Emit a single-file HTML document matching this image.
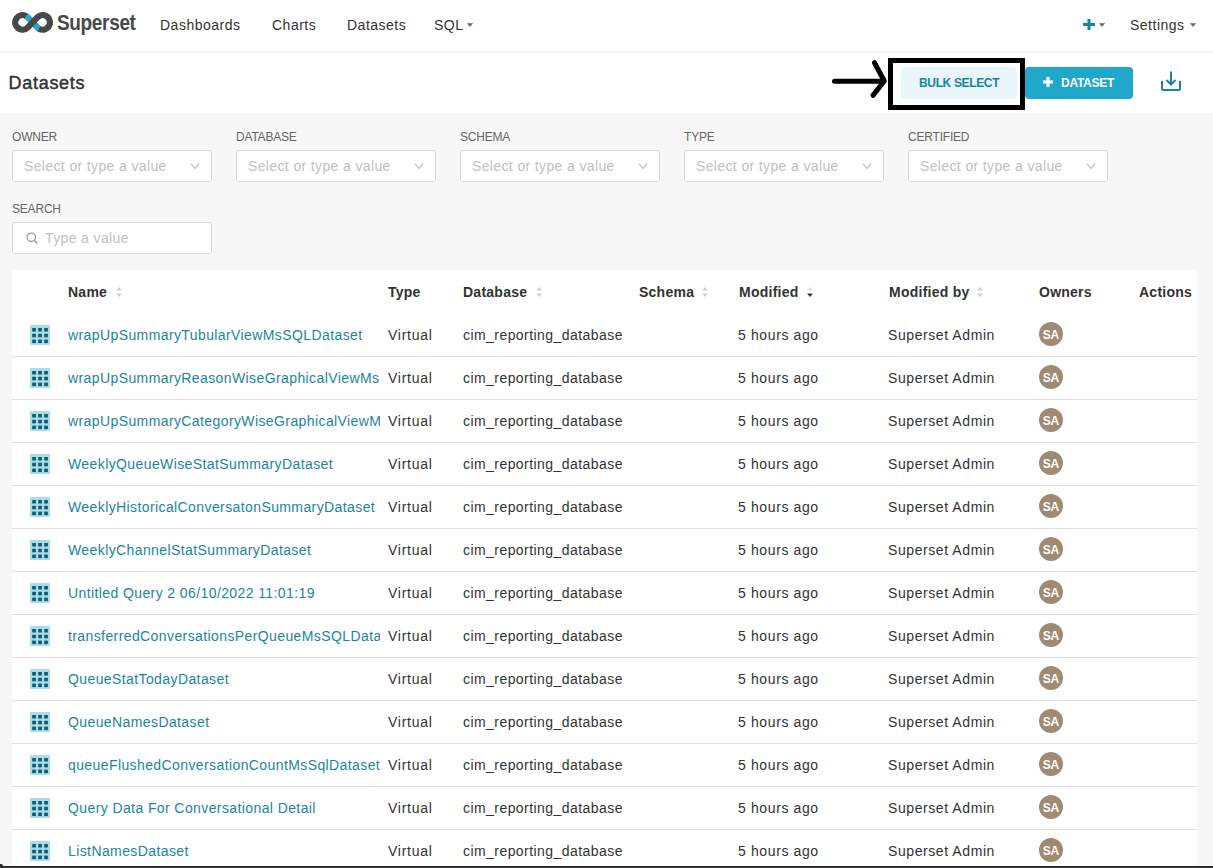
<!DOCTYPE html><html><head><meta charset="utf-8"><title>Datasets</title><style>
*{margin:0;padding:0;box-sizing:border-box}
html,body{width:1213px;height:868px;overflow:hidden;background:#f7f7f7;font-family:"Liberation Sans",sans-serif;color:#323232}
.abs{position:absolute;white-space:nowrap}
#nav{position:absolute;left:0;top:0;width:1213px;height:51px;background:#fff}
#navb{position:absolute;left:0;top:51px;width:1213px;height:2px;background:#f4f4f4}
#ph{position:absolute;left:0;top:53px;width:1213px;height:60px;background:#fff}
.nav{font-size:14px;letter-spacing:0.5px;color:#323232;line-height:16px}
.caret{position:absolute;width:6px;height:4px}
.lbl{font-size:12px;color:#666;line-height:14px;letter-spacing:-0.2px}
.inp{position:absolute;width:200px;height:32px;background:#fff;border:1px solid #d9d9d9;border-radius:3px}
.ph{font-size:14px;color:#bfbfbf;letter-spacing:0.37px;line-height:16px}
.hd{font-size:14px;font-weight:bold;color:#323232;line-height:16px;letter-spacing:0.25px}
.td{font-size:14px;color:#323232;line-height:16px;letter-spacing:0.4px}
.lnk{font-size:14px;color:#1a85a0;line-height:16px;letter-spacing:0.4px;overflow:hidden;width:312px}
.div{position:absolute;left:12px;width:1185px;height:1px;background:#e0e0e0}
.av{position:absolute;width:24px;height:24px;border-radius:50%;background:#a08a73;color:#fff;font-size:12px;font-weight:bold;text-align:center;line-height:26px;letter-spacing:-0.4px;text-indent:-0.4px}
.sort{position:absolute;width:6px;height:10px}
</style></head><body>
<div id="nav"></div><div id="navb"></div><div id="ph"></div>
<svg class="abs" style="left:0;top:0" width="60" height="45" viewBox="0 0 60 45"><path d="M26.42 16.21 A7.3 7.3 0 0 1 27.85 17.38 L37.35 27.42 A7.3 7.3 0 0 0 38.78 28.59" stroke="#20a7c9" stroke-width="6.3" fill="none"/><path d="M38.78 28.59 A7.3 7.3 0 1 0 37.35 17.38 L27.85 27.42 A7.3 7.3 0 1 1 26.42 16.21" stroke="#484848" stroke-width="6.3" fill="none"/></svg>
<div class="abs" style="left:57px;top:10px;font-size:21.5px;font-weight:bold;color:#484848;letter-spacing:-0.4px;line-height:26px;transform:scaleX(0.885);transform-origin:0 0">Superset</div>
<div class="abs nav" style="left:160px;top:17px">Dashboards</div>
<div class="abs nav" style="left:272px;top:17px">Charts</div>
<div class="abs nav" style="left:347px;top:17px">Datasets</div>
<div class="abs nav" style="left:434px;top:17px">SQL</div>
<svg class="caret" style="left:467px;top:23px" viewBox="0 0 6 4"><path d="M0.4 0.4 H5.6 L3 3.6 Z" fill="#666" stroke="#666" stroke-width="0.6" stroke-linejoin="round"/></svg>
<svg class="abs" style="left:1083px;top:19px" width="12" height="11" viewBox="0 0 12 11"><path d="M6 0V11M0 5.5H12" stroke="#1a85a0" stroke-width="3"/></svg>
<svg class="caret" style="left:1099px;top:23px" viewBox="0 0 6 4"><path d="M0.4 0.4 H5.6 L3 3.6 Z" fill="#666" stroke="#666" stroke-width="0.6" stroke-linejoin="round"/></svg>
<div class="abs nav" style="left:1130px;top:17px">Settings</div>
<svg class="caret" style="left:1190px;top:23px" viewBox="0 0 6 4"><path d="M0.4 0.4 H5.6 L3 3.6 Z" fill="#666" stroke="#666" stroke-width="0.6" stroke-linejoin="round"/></svg>
<div class="abs" style="left:8.5px;top:73px;font-size:18px;font-weight:normal;-webkit-text-stroke:0.45px #323232;color:#323232;line-height:20px;letter-spacing:0.72px">Datasets</div>
<svg class="abs" style="left:820px;top:50px" width="70" height="60" viewBox="820 50 70 60"><path d="M834.5 81.3 H884 M874.5 62.7 L884.3 81 L873 95.4" stroke="#000" stroke-width="5" stroke-linecap="round" stroke-linejoin="round" fill="none"/></svg>
<div class="abs" style="left:888px;top:58px;width:137px;height:52px;border:5px solid #000"></div>
<div class="abs" style="left:901px;top:67px;width:116px;height:32px;background:#e9f6f9;border-radius:4px"></div>
<div class="abs" style="left:919px;top:76px;font-size:12px;font-weight:bold;color:#1a85a0;letter-spacing:-0.35px;line-height:14px">BULK SELECT</div>
<div class="abs" style="left:1025px;top:67px;width:108px;height:32px;background:#20a7c9;border-radius:4px"></div>
<svg class="abs" style="left:1043px;top:77px" width="10" height="10" viewBox="0 0 10 10"><path d="M5 0V10M0 5H10" stroke="#fff" stroke-width="3.1"/></svg>
<div class="abs" style="left:1061px;top:76px;font-size:12px;font-weight:bold;color:#fff;letter-spacing:-0.27px;line-height:14px">DATASET</div>
<svg class="abs" style="left:1160px;top:70px" width="22" height="22" viewBox="0 0 22 22"><path d="M11 1.5 V14.5 M6.5 10 L11 14.5 L15.5 10" stroke="#1a85a0" stroke-width="2" fill="none" stroke-linecap="butt" stroke-linejoin="miter"/><path d="M2 11 V18.5 Q2 20 3.5 20 H18.5 Q20 20 20 18.5 V11" stroke="#1a85a0" stroke-width="2" fill="none"/></svg>
<div class="abs lbl" style="left:12px;top:130px">OWNER</div>
<div class="inp" style="left:12px;top:150px"></div>
<div class="abs ph" style="left:24px;top:158px">Select or type a value</div>
<svg class="abs" style="left:190px;top:162px" width="12" height="8" viewBox="0 0 12 8"><path d="M0.9 1.7 L5 6.6 L9.1 1.7" stroke="#bdbdbd" stroke-width="1.05" fill="none"/></svg>
<div class="abs lbl" style="left:236px;top:130px">DATABASE</div>
<div class="inp" style="left:236px;top:150px"></div>
<div class="abs ph" style="left:248px;top:158px">Select or type a value</div>
<svg class="abs" style="left:414px;top:162px" width="12" height="8" viewBox="0 0 12 8"><path d="M0.9 1.7 L5 6.6 L9.1 1.7" stroke="#bdbdbd" stroke-width="1.05" fill="none"/></svg>
<div class="abs lbl" style="left:460px;top:130px">SCHEMA</div>
<div class="inp" style="left:460px;top:150px"></div>
<div class="abs ph" style="left:472px;top:158px">Select or type a value</div>
<svg class="abs" style="left:638px;top:162px" width="12" height="8" viewBox="0 0 12 8"><path d="M0.9 1.7 L5 6.6 L9.1 1.7" stroke="#bdbdbd" stroke-width="1.05" fill="none"/></svg>
<div class="abs lbl" style="left:684px;top:130px">TYPE</div>
<div class="inp" style="left:684px;top:150px"></div>
<div class="abs ph" style="left:696px;top:158px">Select or type a value</div>
<svg class="abs" style="left:862px;top:162px" width="12" height="8" viewBox="0 0 12 8"><path d="M0.9 1.7 L5 6.6 L9.1 1.7" stroke="#bdbdbd" stroke-width="1.05" fill="none"/></svg>
<div class="abs lbl" style="left:908px;top:130px">CERTIFIED</div>
<div class="inp" style="left:908px;top:150px"></div>
<div class="abs ph" style="left:920px;top:158px">Select or type a value</div>
<svg class="abs" style="left:1086px;top:162px" width="12" height="8" viewBox="0 0 12 8"><path d="M0.9 1.7 L5 6.6 L9.1 1.7" stroke="#bdbdbd" stroke-width="1.05" fill="none"/></svg>
<div class="abs lbl" style="left:12px;top:202px">SEARCH</div>
<div class="inp" style="left:12px;top:222px"></div>
<svg class="abs" style="left:26px;top:232px" width="13" height="13" viewBox="0 0 13 13"><circle cx="5.3" cy="5.3" r="4.2" stroke="#9a9a9a" stroke-width="1.3" fill="none"/><path d="M8.4 8.4 L11.5 11.5" stroke="#9a9a9a" stroke-width="1.4"/></svg>
<div class="abs ph" style="left:45px;top:230px">Type a value</div>
<div class="abs" style="left:12px;top:270px;width:1185px;height:600px;background:#fff"></div>
<div class="abs hd" style="left:68px;top:284px">Name</div>
<svg class="abs" style="left:116px;top:287px" width="6" height="10" viewBox="0 0 6 10"><path d="M0 3.5 L3 0 L6 3.5 Z" fill="#d1d1d1"/><path d="M0 6.5 L3 10 L6 6.5 Z" fill="#d1d1d1"/></svg>
<div class="abs hd" style="left:388px;top:284px">Type</div>
<div class="abs hd" style="left:463px;top:284px">Database</div>
<svg class="abs" style="left:536px;top:287px" width="6" height="10" viewBox="0 0 6 10"><path d="M0 3.5 L3 0 L6 3.5 Z" fill="#d1d1d1"/><path d="M0 6.5 L3 10 L6 6.5 Z" fill="#d1d1d1"/></svg>
<div class="abs hd" style="left:639px;top:284px">Schema</div>
<svg class="abs" style="left:701.5px;top:287px" width="6" height="10" viewBox="0 0 6 10"><path d="M0 3.5 L3 0 L6 3.5 Z" fill="#d1d1d1"/><path d="M0 6.5 L3 10 L6 6.5 Z" fill="#d1d1d1"/></svg>
<div class="abs hd" style="left:739px;top:284px">Modified</div>
<svg class="abs" style="left:806.5px;top:287px" width="6" height="10" viewBox="0 0 6 10"><path d="M0 3.5 L3 0 L6 3.5 Z" fill="#dedede"/><path d="M0 6.5 L3 10 L6 6.5 Z" fill="#323232"/></svg>
<div class="abs hd" style="left:889px;top:284px">Modified by</div>
<svg class="abs" style="left:977px;top:287px" width="6" height="10" viewBox="0 0 6 10"><path d="M0 3.5 L3 0 L6 3.5 Z" fill="#d1d1d1"/><path d="M0 6.5 L3 10 L6 6.5 Z" fill="#d1d1d1"/></svg>
<div class="abs hd" style="left:1039px;top:284px">Owners</div>
<div class="abs hd" style="left:1139px;top:284px">Actions</div>
<svg class="abs" style="left:30px;top:325px" width="20" height="20" viewBox="0 0 20 20"><rect x="0" y="0" width="20" height="20" rx="1" fill="#a9dbe8"/><rect x="2.2" y="3.0" width="3.7" height="3.5" fill="#0f5d73"/><rect x="8.2" y="3.0" width="3.7" height="3.5" fill="#0f5d73"/><rect x="14.2" y="3.0" width="3.7" height="3.5" fill="#0f5d73"/><rect x="2.2" y="8.8" width="3.7" height="3.5" fill="#0f5d73"/><rect x="8.2" y="8.8" width="3.7" height="3.5" fill="#0f5d73"/><rect x="14.2" y="8.8" width="3.7" height="3.5" fill="#0f5d73"/><rect x="2.2" y="14.6" width="3.7" height="3.5" fill="#0f5d73"/><rect x="8.2" y="14.6" width="3.7" height="3.5" fill="#0f5d73"/><rect x="14.2" y="14.6" width="3.7" height="3.5" fill="#0f5d73"/></svg>
<div class="abs lnk" style="left:68px;top:327px">wrapUpSummaryTubularViewMsSQLDataset</div>
<div class="abs td" style="left:388px;top:327px;letter-spacing:0.75px">Virtual</div>
<div class="abs td" style="left:463px;top:327px;letter-spacing:0.44px">cim_reporting_database</div>
<div class="abs td" style="left:738px;top:327px;letter-spacing:0.62px">5 hours ago</div>
<div class="abs td" style="left:888px;top:327px;letter-spacing:0.58px">Superset Admin</div>
<div class="av" style="left:1039px;top:322px">SA</div>
<div class="div" style="top:356px"></div>
<svg class="abs" style="left:30px;top:368px" width="20" height="20" viewBox="0 0 20 20"><rect x="0" y="0" width="20" height="20" rx="1" fill="#a9dbe8"/><rect x="2.2" y="3.0" width="3.7" height="3.5" fill="#0f5d73"/><rect x="8.2" y="3.0" width="3.7" height="3.5" fill="#0f5d73"/><rect x="14.2" y="3.0" width="3.7" height="3.5" fill="#0f5d73"/><rect x="2.2" y="8.8" width="3.7" height="3.5" fill="#0f5d73"/><rect x="8.2" y="8.8" width="3.7" height="3.5" fill="#0f5d73"/><rect x="14.2" y="8.8" width="3.7" height="3.5" fill="#0f5d73"/><rect x="2.2" y="14.6" width="3.7" height="3.5" fill="#0f5d73"/><rect x="8.2" y="14.6" width="3.7" height="3.5" fill="#0f5d73"/><rect x="14.2" y="14.6" width="3.7" height="3.5" fill="#0f5d73"/></svg>
<div class="abs lnk" style="left:68px;top:370px">wrapUpSummaryReasonWiseGraphicalViewMsSQLDataset</div>
<div class="abs td" style="left:388px;top:370px;letter-spacing:0.75px">Virtual</div>
<div class="abs td" style="left:463px;top:370px;letter-spacing:0.44px">cim_reporting_database</div>
<div class="abs td" style="left:738px;top:370px;letter-spacing:0.62px">5 hours ago</div>
<div class="abs td" style="left:888px;top:370px;letter-spacing:0.58px">Superset Admin</div>
<div class="av" style="left:1039px;top:365px">SA</div>
<div class="div" style="top:399px"></div>
<svg class="abs" style="left:30px;top:411px" width="20" height="20" viewBox="0 0 20 20"><rect x="0" y="0" width="20" height="20" rx="1" fill="#a9dbe8"/><rect x="2.2" y="3.0" width="3.7" height="3.5" fill="#0f5d73"/><rect x="8.2" y="3.0" width="3.7" height="3.5" fill="#0f5d73"/><rect x="14.2" y="3.0" width="3.7" height="3.5" fill="#0f5d73"/><rect x="2.2" y="8.8" width="3.7" height="3.5" fill="#0f5d73"/><rect x="8.2" y="8.8" width="3.7" height="3.5" fill="#0f5d73"/><rect x="14.2" y="8.8" width="3.7" height="3.5" fill="#0f5d73"/><rect x="2.2" y="14.6" width="3.7" height="3.5" fill="#0f5d73"/><rect x="8.2" y="14.6" width="3.7" height="3.5" fill="#0f5d73"/><rect x="14.2" y="14.6" width="3.7" height="3.5" fill="#0f5d73"/></svg>
<div class="abs lnk" style="left:68px;top:413px">wrapUpSummaryCategoryWiseGraphicalViewMsSQLDataset</div>
<div class="abs td" style="left:388px;top:413px;letter-spacing:0.75px">Virtual</div>
<div class="abs td" style="left:463px;top:413px;letter-spacing:0.44px">cim_reporting_database</div>
<div class="abs td" style="left:738px;top:413px;letter-spacing:0.62px">5 hours ago</div>
<div class="abs td" style="left:888px;top:413px;letter-spacing:0.58px">Superset Admin</div>
<div class="av" style="left:1039px;top:408px">SA</div>
<div class="div" style="top:442px"></div>
<svg class="abs" style="left:30px;top:454px" width="20" height="20" viewBox="0 0 20 20"><rect x="0" y="0" width="20" height="20" rx="1" fill="#a9dbe8"/><rect x="2.2" y="3.0" width="3.7" height="3.5" fill="#0f5d73"/><rect x="8.2" y="3.0" width="3.7" height="3.5" fill="#0f5d73"/><rect x="14.2" y="3.0" width="3.7" height="3.5" fill="#0f5d73"/><rect x="2.2" y="8.8" width="3.7" height="3.5" fill="#0f5d73"/><rect x="8.2" y="8.8" width="3.7" height="3.5" fill="#0f5d73"/><rect x="14.2" y="8.8" width="3.7" height="3.5" fill="#0f5d73"/><rect x="2.2" y="14.6" width="3.7" height="3.5" fill="#0f5d73"/><rect x="8.2" y="14.6" width="3.7" height="3.5" fill="#0f5d73"/><rect x="14.2" y="14.6" width="3.7" height="3.5" fill="#0f5d73"/></svg>
<div class="abs lnk" style="left:68px;top:456px">WeeklyQueueWiseStatSummaryDataset</div>
<div class="abs td" style="left:388px;top:456px;letter-spacing:0.75px">Virtual</div>
<div class="abs td" style="left:463px;top:456px;letter-spacing:0.44px">cim_reporting_database</div>
<div class="abs td" style="left:738px;top:456px;letter-spacing:0.62px">5 hours ago</div>
<div class="abs td" style="left:888px;top:456px;letter-spacing:0.58px">Superset Admin</div>
<div class="av" style="left:1039px;top:451px">SA</div>
<div class="div" style="top:485px"></div>
<svg class="abs" style="left:30px;top:497px" width="20" height="20" viewBox="0 0 20 20"><rect x="0" y="0" width="20" height="20" rx="1" fill="#a9dbe8"/><rect x="2.2" y="3.0" width="3.7" height="3.5" fill="#0f5d73"/><rect x="8.2" y="3.0" width="3.7" height="3.5" fill="#0f5d73"/><rect x="14.2" y="3.0" width="3.7" height="3.5" fill="#0f5d73"/><rect x="2.2" y="8.8" width="3.7" height="3.5" fill="#0f5d73"/><rect x="8.2" y="8.8" width="3.7" height="3.5" fill="#0f5d73"/><rect x="14.2" y="8.8" width="3.7" height="3.5" fill="#0f5d73"/><rect x="2.2" y="14.6" width="3.7" height="3.5" fill="#0f5d73"/><rect x="8.2" y="14.6" width="3.7" height="3.5" fill="#0f5d73"/><rect x="14.2" y="14.6" width="3.7" height="3.5" fill="#0f5d73"/></svg>
<div class="abs lnk" style="left:68px;top:499px">WeeklyHistoricalConversatonSummaryDataset</div>
<div class="abs td" style="left:388px;top:499px;letter-spacing:0.75px">Virtual</div>
<div class="abs td" style="left:463px;top:499px;letter-spacing:0.44px">cim_reporting_database</div>
<div class="abs td" style="left:738px;top:499px;letter-spacing:0.62px">5 hours ago</div>
<div class="abs td" style="left:888px;top:499px;letter-spacing:0.58px">Superset Admin</div>
<div class="av" style="left:1039px;top:494px">SA</div>
<div class="div" style="top:528px"></div>
<svg class="abs" style="left:30px;top:540px" width="20" height="20" viewBox="0 0 20 20"><rect x="0" y="0" width="20" height="20" rx="1" fill="#a9dbe8"/><rect x="2.2" y="3.0" width="3.7" height="3.5" fill="#0f5d73"/><rect x="8.2" y="3.0" width="3.7" height="3.5" fill="#0f5d73"/><rect x="14.2" y="3.0" width="3.7" height="3.5" fill="#0f5d73"/><rect x="2.2" y="8.8" width="3.7" height="3.5" fill="#0f5d73"/><rect x="8.2" y="8.8" width="3.7" height="3.5" fill="#0f5d73"/><rect x="14.2" y="8.8" width="3.7" height="3.5" fill="#0f5d73"/><rect x="2.2" y="14.6" width="3.7" height="3.5" fill="#0f5d73"/><rect x="8.2" y="14.6" width="3.7" height="3.5" fill="#0f5d73"/><rect x="14.2" y="14.6" width="3.7" height="3.5" fill="#0f5d73"/></svg>
<div class="abs lnk" style="left:68px;top:542px">WeeklyChannelStatSummaryDataset</div>
<div class="abs td" style="left:388px;top:542px;letter-spacing:0.75px">Virtual</div>
<div class="abs td" style="left:463px;top:542px;letter-spacing:0.44px">cim_reporting_database</div>
<div class="abs td" style="left:738px;top:542px;letter-spacing:0.62px">5 hours ago</div>
<div class="abs td" style="left:888px;top:542px;letter-spacing:0.58px">Superset Admin</div>
<div class="av" style="left:1039px;top:537px">SA</div>
<div class="div" style="top:571px"></div>
<svg class="abs" style="left:30px;top:583px" width="20" height="20" viewBox="0 0 20 20"><rect x="0" y="0" width="20" height="20" rx="1" fill="#a9dbe8"/><rect x="2.2" y="3.0" width="3.7" height="3.5" fill="#0f5d73"/><rect x="8.2" y="3.0" width="3.7" height="3.5" fill="#0f5d73"/><rect x="14.2" y="3.0" width="3.7" height="3.5" fill="#0f5d73"/><rect x="2.2" y="8.8" width="3.7" height="3.5" fill="#0f5d73"/><rect x="8.2" y="8.8" width="3.7" height="3.5" fill="#0f5d73"/><rect x="14.2" y="8.8" width="3.7" height="3.5" fill="#0f5d73"/><rect x="2.2" y="14.6" width="3.7" height="3.5" fill="#0f5d73"/><rect x="8.2" y="14.6" width="3.7" height="3.5" fill="#0f5d73"/><rect x="14.2" y="14.6" width="3.7" height="3.5" fill="#0f5d73"/></svg>
<div class="abs lnk" style="left:68px;top:585px">Untitled Query 2 06/10/2022 11:01:19</div>
<div class="abs td" style="left:388px;top:585px;letter-spacing:0.75px">Virtual</div>
<div class="abs td" style="left:463px;top:585px;letter-spacing:0.44px">cim_reporting_database</div>
<div class="abs td" style="left:738px;top:585px;letter-spacing:0.62px">5 hours ago</div>
<div class="abs td" style="left:888px;top:585px;letter-spacing:0.58px">Superset Admin</div>
<div class="av" style="left:1039px;top:580px">SA</div>
<div class="div" style="top:614px"></div>
<svg class="abs" style="left:30px;top:626px" width="20" height="20" viewBox="0 0 20 20"><rect x="0" y="0" width="20" height="20" rx="1" fill="#a9dbe8"/><rect x="2.2" y="3.0" width="3.7" height="3.5" fill="#0f5d73"/><rect x="8.2" y="3.0" width="3.7" height="3.5" fill="#0f5d73"/><rect x="14.2" y="3.0" width="3.7" height="3.5" fill="#0f5d73"/><rect x="2.2" y="8.8" width="3.7" height="3.5" fill="#0f5d73"/><rect x="8.2" y="8.8" width="3.7" height="3.5" fill="#0f5d73"/><rect x="14.2" y="8.8" width="3.7" height="3.5" fill="#0f5d73"/><rect x="2.2" y="14.6" width="3.7" height="3.5" fill="#0f5d73"/><rect x="8.2" y="14.6" width="3.7" height="3.5" fill="#0f5d73"/><rect x="14.2" y="14.6" width="3.7" height="3.5" fill="#0f5d73"/></svg>
<div class="abs lnk" style="left:68px;top:628px">transferredConversationsPerQueueMsSQLDataset</div>
<div class="abs td" style="left:388px;top:628px;letter-spacing:0.75px">Virtual</div>
<div class="abs td" style="left:463px;top:628px;letter-spacing:0.44px">cim_reporting_database</div>
<div class="abs td" style="left:738px;top:628px;letter-spacing:0.62px">5 hours ago</div>
<div class="abs td" style="left:888px;top:628px;letter-spacing:0.58px">Superset Admin</div>
<div class="av" style="left:1039px;top:623px">SA</div>
<div class="div" style="top:657px"></div>
<svg class="abs" style="left:30px;top:669px" width="20" height="20" viewBox="0 0 20 20"><rect x="0" y="0" width="20" height="20" rx="1" fill="#a9dbe8"/><rect x="2.2" y="3.0" width="3.7" height="3.5" fill="#0f5d73"/><rect x="8.2" y="3.0" width="3.7" height="3.5" fill="#0f5d73"/><rect x="14.2" y="3.0" width="3.7" height="3.5" fill="#0f5d73"/><rect x="2.2" y="8.8" width="3.7" height="3.5" fill="#0f5d73"/><rect x="8.2" y="8.8" width="3.7" height="3.5" fill="#0f5d73"/><rect x="14.2" y="8.8" width="3.7" height="3.5" fill="#0f5d73"/><rect x="2.2" y="14.6" width="3.7" height="3.5" fill="#0f5d73"/><rect x="8.2" y="14.6" width="3.7" height="3.5" fill="#0f5d73"/><rect x="14.2" y="14.6" width="3.7" height="3.5" fill="#0f5d73"/></svg>
<div class="abs lnk" style="left:68px;top:671px">QueueStatTodayDataset</div>
<div class="abs td" style="left:388px;top:671px;letter-spacing:0.75px">Virtual</div>
<div class="abs td" style="left:463px;top:671px;letter-spacing:0.44px">cim_reporting_database</div>
<div class="abs td" style="left:738px;top:671px;letter-spacing:0.62px">5 hours ago</div>
<div class="abs td" style="left:888px;top:671px;letter-spacing:0.58px">Superset Admin</div>
<div class="av" style="left:1039px;top:666px">SA</div>
<div class="div" style="top:700px"></div>
<svg class="abs" style="left:30px;top:712px" width="20" height="20" viewBox="0 0 20 20"><rect x="0" y="0" width="20" height="20" rx="1" fill="#a9dbe8"/><rect x="2.2" y="3.0" width="3.7" height="3.5" fill="#0f5d73"/><rect x="8.2" y="3.0" width="3.7" height="3.5" fill="#0f5d73"/><rect x="14.2" y="3.0" width="3.7" height="3.5" fill="#0f5d73"/><rect x="2.2" y="8.8" width="3.7" height="3.5" fill="#0f5d73"/><rect x="8.2" y="8.8" width="3.7" height="3.5" fill="#0f5d73"/><rect x="14.2" y="8.8" width="3.7" height="3.5" fill="#0f5d73"/><rect x="2.2" y="14.6" width="3.7" height="3.5" fill="#0f5d73"/><rect x="8.2" y="14.6" width="3.7" height="3.5" fill="#0f5d73"/><rect x="14.2" y="14.6" width="3.7" height="3.5" fill="#0f5d73"/></svg>
<div class="abs lnk" style="left:68px;top:714px">QueueNamesDataset</div>
<div class="abs td" style="left:388px;top:714px;letter-spacing:0.75px">Virtual</div>
<div class="abs td" style="left:463px;top:714px;letter-spacing:0.44px">cim_reporting_database</div>
<div class="abs td" style="left:738px;top:714px;letter-spacing:0.62px">5 hours ago</div>
<div class="abs td" style="left:888px;top:714px;letter-spacing:0.58px">Superset Admin</div>
<div class="av" style="left:1039px;top:709px">SA</div>
<div class="div" style="top:743px"></div>
<svg class="abs" style="left:30px;top:755px" width="20" height="20" viewBox="0 0 20 20"><rect x="0" y="0" width="20" height="20" rx="1" fill="#a9dbe8"/><rect x="2.2" y="3.0" width="3.7" height="3.5" fill="#0f5d73"/><rect x="8.2" y="3.0" width="3.7" height="3.5" fill="#0f5d73"/><rect x="14.2" y="3.0" width="3.7" height="3.5" fill="#0f5d73"/><rect x="2.2" y="8.8" width="3.7" height="3.5" fill="#0f5d73"/><rect x="8.2" y="8.8" width="3.7" height="3.5" fill="#0f5d73"/><rect x="14.2" y="8.8" width="3.7" height="3.5" fill="#0f5d73"/><rect x="2.2" y="14.6" width="3.7" height="3.5" fill="#0f5d73"/><rect x="8.2" y="14.6" width="3.7" height="3.5" fill="#0f5d73"/><rect x="14.2" y="14.6" width="3.7" height="3.5" fill="#0f5d73"/></svg>
<div class="abs lnk" style="left:68px;top:757px">queueFlushedConversationCountMsSqlDataset</div>
<div class="abs td" style="left:388px;top:757px;letter-spacing:0.75px">Virtual</div>
<div class="abs td" style="left:463px;top:757px;letter-spacing:0.44px">cim_reporting_database</div>
<div class="abs td" style="left:738px;top:757px;letter-spacing:0.62px">5 hours ago</div>
<div class="abs td" style="left:888px;top:757px;letter-spacing:0.58px">Superset Admin</div>
<div class="av" style="left:1039px;top:752px">SA</div>
<div class="div" style="top:786px"></div>
<svg class="abs" style="left:30px;top:798px" width="20" height="20" viewBox="0 0 20 20"><rect x="0" y="0" width="20" height="20" rx="1" fill="#a9dbe8"/><rect x="2.2" y="3.0" width="3.7" height="3.5" fill="#0f5d73"/><rect x="8.2" y="3.0" width="3.7" height="3.5" fill="#0f5d73"/><rect x="14.2" y="3.0" width="3.7" height="3.5" fill="#0f5d73"/><rect x="2.2" y="8.8" width="3.7" height="3.5" fill="#0f5d73"/><rect x="8.2" y="8.8" width="3.7" height="3.5" fill="#0f5d73"/><rect x="14.2" y="8.8" width="3.7" height="3.5" fill="#0f5d73"/><rect x="2.2" y="14.6" width="3.7" height="3.5" fill="#0f5d73"/><rect x="8.2" y="14.6" width="3.7" height="3.5" fill="#0f5d73"/><rect x="14.2" y="14.6" width="3.7" height="3.5" fill="#0f5d73"/></svg>
<div class="abs lnk" style="left:68px;top:800px">Query Data For Conversational Detail</div>
<div class="abs td" style="left:388px;top:800px;letter-spacing:0.75px">Virtual</div>
<div class="abs td" style="left:463px;top:800px;letter-spacing:0.44px">cim_reporting_database</div>
<div class="abs td" style="left:738px;top:800px;letter-spacing:0.62px">5 hours ago</div>
<div class="abs td" style="left:888px;top:800px;letter-spacing:0.58px">Superset Admin</div>
<div class="av" style="left:1039px;top:795px">SA</div>
<div class="div" style="top:829px"></div>
<svg class="abs" style="left:30px;top:841px" width="20" height="20" viewBox="0 0 20 20"><rect x="0" y="0" width="20" height="20" rx="1" fill="#a9dbe8"/><rect x="2.2" y="3.0" width="3.7" height="3.5" fill="#0f5d73"/><rect x="8.2" y="3.0" width="3.7" height="3.5" fill="#0f5d73"/><rect x="14.2" y="3.0" width="3.7" height="3.5" fill="#0f5d73"/><rect x="2.2" y="8.8" width="3.7" height="3.5" fill="#0f5d73"/><rect x="8.2" y="8.8" width="3.7" height="3.5" fill="#0f5d73"/><rect x="14.2" y="8.8" width="3.7" height="3.5" fill="#0f5d73"/><rect x="2.2" y="14.6" width="3.7" height="3.5" fill="#0f5d73"/><rect x="8.2" y="14.6" width="3.7" height="3.5" fill="#0f5d73"/><rect x="14.2" y="14.6" width="3.7" height="3.5" fill="#0f5d73"/></svg>
<div class="abs lnk" style="left:68px;top:843px">ListNamesDataset</div>
<div class="abs td" style="left:388px;top:843px;letter-spacing:0.75px">Virtual</div>
<div class="abs td" style="left:463px;top:843px;letter-spacing:0.44px">cim_reporting_database</div>
<div class="abs td" style="left:738px;top:843px;letter-spacing:0.62px">5 hours ago</div>
<div class="abs td" style="left:888px;top:843px;letter-spacing:0.58px">Superset Admin</div>
<div class="av" style="left:1039px;top:838px">SA</div>
<div class="div" style="top:872px"></div>
<div class="abs" style="left:0;top:865px;width:1213px;height:1px;background:#fff"></div>
<div class="abs" style="left:0;top:866px;width:1213px;height:1px;background:#242424"></div>
<div class="abs" style="left:0;top:867px;width:1213px;height:1px;background:#3a3a3a"></div>
<div class="abs" style="left:0;top:864px;width:3px;height:2px;background:#2a2a2a;border-top-right-radius:2px"></div>
</body></html>
